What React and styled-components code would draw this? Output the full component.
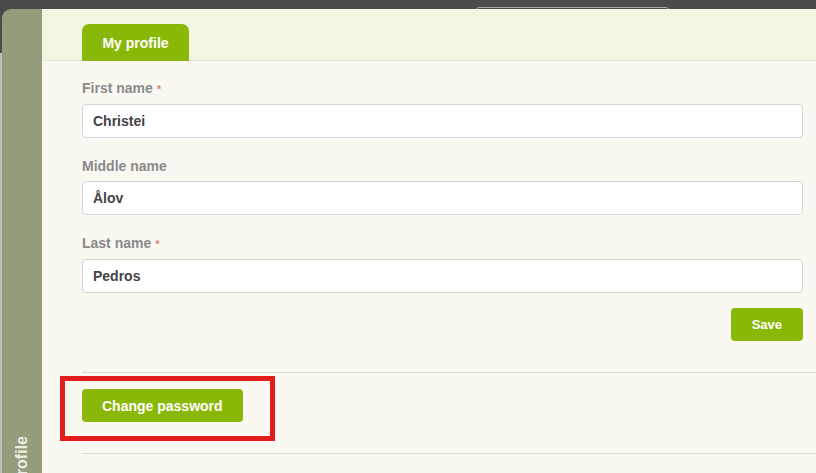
import styled, { createGlobalStyle } from "styled-components";

const GlobalStyle = createGlobalStyle`
  html, body {
    margin: 0;
    padding: 0;
    height: 473px;
    overflow: hidden;
  }
  body {
    font-family: "Liberation Sans", Arial, sans-serif;
  }
`;

const Page = styled.div`
  position: relative;
  height: 473px;
  display: flex;
  flex-direction: column;
  overflow: hidden;
  background: linear-gradient(#4b4b4b 53px, #bdbdbd 53px);
`;

const TopBar = styled.div`
  height: 9px;
  flex: none;
  background: #4b4b4b;
  padding-left: 476px;
  overflow: hidden;
`;

const GhostField = styled.div`
  width: 193px;
  height: 10px;
  margin-top: 7px;
  box-sizing: border-box;
  border: 1px solid #a9a9a9;
  border-radius: 3px;
`;

const Shell = styled.div`
  flex: 1;
  display: flex;
  margin-left: 2px;
  border-top-left-radius: 9px;
  overflow: hidden;
`;

const Sidebar = styled.div`
  width: 40px;
  flex: none;
  background: #939c7b;
  display: flex;
  flex-direction: column;
  justify-content: flex-end;
  align-items: center;
  overflow: hidden;
`;

const SideLabel = styled.div`
  writing-mode: vertical-rl;
  transform: rotate(180deg);
  color: rgba(255, 255, 255, 0.82);
  font-weight: 700;
  font-size: 16px;
  line-height: 20px;
  margin-bottom: -13px;
  white-space: nowrap;
`;

const Main = styled.div`
  flex: 1;
  background: #f9f9f1;
  display: flex;
  flex-direction: column;
`;

const Header = styled.div`
  height: 52px;
  flex: none;
  box-sizing: border-box;
  background: #f1f6e2;
  border-bottom: 1px solid #e1e4d6;
  padding-left: 40px;
  display: flex;
  align-items: flex-end;
`;

const Tab = styled.div`
  width: 107px;
  height: 37px;
  margin-bottom: -1px;
  background: #8ab808;
  border-radius: 7px 7px 0 0;
  color: #fff;
  font-weight: 700;
  font-size: 14px;
  display: flex;
  align-items: center;
  justify-content: center;
`;

const Form = styled.div`
  padding: 20px 13px 0 40px;
  display: flex;
  flex-direction: column;
`;

const Field = styled.div`
  display: flex;
  flex-direction: column;
  margin-bottom: ${(p) => (p.$last ? "15px" : "21px")};
`;

const Label = styled.div`
  color: #8a8a8a;
  font-weight: 700;
  font-size: 14px;
  line-height: 15px;
  margin-bottom: 7px;
`;

const Required = styled.span`
  color: #e37b7b;
  font-size: 11px;
  margin-left: 4px;
`;

const Input = styled.div`
  height: 34px;
  box-sizing: border-box;
  background: #fff;
  border: 1px solid #d6d6d6;
  border-radius: 4px;
  padding: 0 10px;
  display: flex;
  align-items: center;
  color: #444;
  font-weight: 700;
  font-size: 14px;
`;

const Actions = styled.div`
  display: flex;
  justify-content: ${(p) => (p.$end ? "flex-end" : "flex-start")};
`;

const Button = styled.div`
  height: 33px;
  padding: 0 ${(p) => (p.$wide ? "20px" : "21px")};
  background: #8ab808;
  border-radius: 4px;
  color: #fff;
  font-weight: 700;
  font-size: ${(p) => (p.$wide ? "14px" : "13px")};
  display: flex;
  align-items: center;
  cursor: pointer;
`;

const Rule = styled.div`
  height: 1px;
  background: #dcdcd4;
  margin: 31px -13px 16px 0;
`;

const Highlight = styled.div`
  position: absolute;
  left: 60px;
  top: 376px;
  width: 215px;
  height: 65px;
  box-sizing: border-box;
  border: 5px solid #e31c1c;
  pointer-events: none;
`;

const fields = [
  { label: "First name", value: "Christei", required: true },
  { label: "Middle name", value: "Ålov" },
  { label: "Last name", value: "Pedros", required: true },
];

export default function App() {
  return (
    <Page>
      <GlobalStyle />
      <TopBar>
        <GhostField />
      </TopBar>
      <Shell>
        <Sidebar>
          <SideLabel>Profile</SideLabel>
        </Sidebar>
        <Main>
          <Header>
            <Tab>My profile</Tab>
          </Header>
          <Form>
            {fields.map((f, i) => (
              <Field key={f.label} $last={i === fields.length - 1}>
                <Label>
                  {f.label}
                  {f.required && <Required>*</Required>}
                </Label>
                <Input>{f.value}</Input>
              </Field>
            ))}
            <Actions $end>
              <Button>Save</Button>
            </Actions>
            <Rule />
            <Actions>
              <Button $wide>Change password</Button>
            </Actions>
            <Rule />
          </Form>
        </Main>
      </Shell>
      <Highlight />
    </Page>
  );
}
